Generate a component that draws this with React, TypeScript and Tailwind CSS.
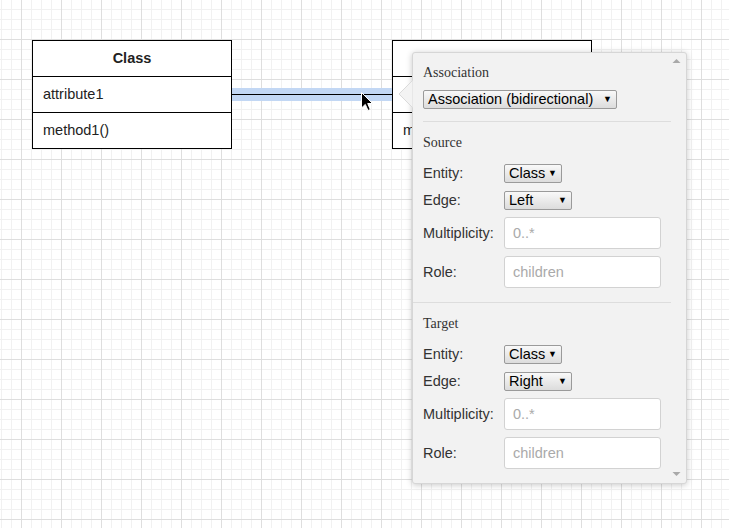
import React from "react";

function Grid() {
  return (
    <svg className="absolute inset-0" width={729} height={528}>
      <defs>
        <pattern id="minor" width={10} height={10} x={1} y={9} patternUnits="userSpaceOnUse">
          <path d="M0.5 0 V10 M0 0.5 H10" stroke="#f1f1f1" strokeWidth={1} fill="none" />
        </pattern>
        <pattern id="major" width={40} height={40} x={21} y={39} patternUnits="userSpaceOnUse">
          <path d="M0.5 0 V40 M0 0.5 H40" stroke="#dedede" strokeWidth={1} fill="none" />
        </pattern>
      </defs>
      <rect width={729} height={528} fill="url(#minor)" />
      <rect width={729} height={528} fill="url(#major)" />
    </svg>
  );
}

function ClassBox({ className, hidden = false }: { className: string; hidden?: boolean }) {
  return (
    <div className={`absolute top-[40px] w-[200px] border border-black bg-white text-[14.5px] text-[#222] ${className}`}>
      <div className="h-[35px] flex items-center justify-center font-bold">{hidden ? "" : "Class"}</div>
      <div className="h-[36px] flex items-center pl-[10px] border-t border-black">{hidden ? "" : "attribute1"}</div>
      <div className="h-[36px] flex items-center pl-[10px] border-t border-black">
        {hidden ? <span className="w-[9px] overflow-hidden whitespace-nowrap">method1()</span> : "method1()"}
      </div>
    </div>
  );
}

function Select({ value, width }: { value: string; width: string }) {
  return (
    <div
      className={`h-[19px] ${width} flex items-center justify-between pl-[4px] pr-[4px] border border-[#9a9a9a] rounded-[2px] bg-gradient-to-b from-[#f9f9f9] to-[#dcdcdc] text-[14.5px] text-black leading-none`}
    >
      <span>{value}</span>
      <span className="text-[9px]">▼</span>
    </div>
  );
}

function Input({ placeholder }: { placeholder: string }) {
  return (
    <div className="h-[32px] w-[157px] flex items-center pl-[8px] bg-white border border-[#d2d2d2] rounded-[3px] text-[14.5px] leading-none text-[#aaaaaa]">
      {placeholder}
    </div>
  );
}

function Row({ label, children, className = "" }: { label: string; children: React.ReactNode; className?: string }) {
  return (
    <div className={`flex items-center ${className}`}>
      <div className="w-[81px] text-[14.5px] leading-none text-[#333]">{label}</div>
      {children}
    </div>
  );
}

function Heading({ children, className = "" }: { children: React.ReactNode; className?: string }) {
  return (
    <div className={`h-[20px] leading-[20px] font-['Liberation_Serif',serif] text-[14px] text-[#333] ${className}`}>
      {children}
    </div>
  );
}

function EndSection({ title, edge }: { title: string; edge: string }) {
  return (
    <div className="flex flex-col">
      <Heading className="mt-[11px]">{title}</Heading>
      <Row label="Entity:" className="mt-[11px] h-[19px]">
        <Select value="Class" width="w-[58px]" />
      </Row>
      <Row label="Edge:" className="mt-[8px] h-[19px]">
        <Select value={edge} width="w-[68px]" />
      </Row>
      <Row label="Multiplicity:" className="mt-[7px] h-[32px]">
        <Input placeholder="0..*" />
      </Row>
      <Row label="Role:" className="mt-[7px] h-[32px]">
        <Input placeholder="children" />
      </Row>
    </div>
  );
}

export default function App() {
  return (
    <div className="relative w-[729px] h-[528px] overflow-hidden bg-white font-['Liberation_Sans',Arial,sans-serif]">
      <Grid />
      {/* connection */}
      <div className="absolute left-[232px] top-[88px] w-[160px] h-[13px] bg-[#c2d7f4]" />
      <div className="absolute left-[232px] top-[94px] w-[160px] h-px bg-black" />
      <ClassBox className="left-[32px]" />
      <ClassBox className="left-[392px]" hidden />

      {/* popup */}
      <div className="absolute left-[412px] top-[52px] w-[275px] h-[432px] bg-[#f2f2f2] border border-[#d6d6d6] rounded-[3px] shadow-[0_1px_6px_rgba(0,0,0,0.22)] pl-[10px] pr-[15px] pt-[10px]">
        <Heading>Association</Heading>
        <div className="mt-[7px]">
          <Select value="Association (bidirectional)" width="w-[194px]" />
        </div>
        <div className="mt-[12px] h-px bg-[#dddddd]" />
        <EndSection title="Source" edge="Left" />
        <div className="mt-[14px] -ml-[10px] h-px bg-[#dddddd]" />
        <EndSection title="Target" edge="Right" />

        <svg className="absolute right-[5px] top-[5px]" width={9} height={6}>
          <polygon points="0.5,5 4.5,1 8.5,5" fill="#a9a9a9" />
        </svg>
        <svg className="absolute right-[5px] bottom-[6px]" width={9} height={6}>
          <polygon points="0.5,1 8.5,1 4.5,5" fill="#a9a9a9" />
        </svg>
      </div>

      {/* popup pointer */}
      <svg className="absolute left-[398px] top-[80px]" width={16} height={29}>
        <polygon points="15,0 1,14 15,28" fill="#f3f3f3" stroke="#dadada" strokeWidth={1} />
        <rect x={15} y={0} width={1} height={29} fill="#f2f2f2" />
      </svg>

      {/* cursor */}
      <svg className="absolute left-[360px] top-[91px]" width={14} height={22}>
        <path d="M1.5 1.5 L1.5 17 L5.3 13.4 L8 19.5 L10.3 18.5 L7.7 12.5 L12.5 12.5 Z" fill="#000" stroke="#fff" strokeWidth={1} strokeLinejoin="round" />
      </svg>
    </div>
  );
}
